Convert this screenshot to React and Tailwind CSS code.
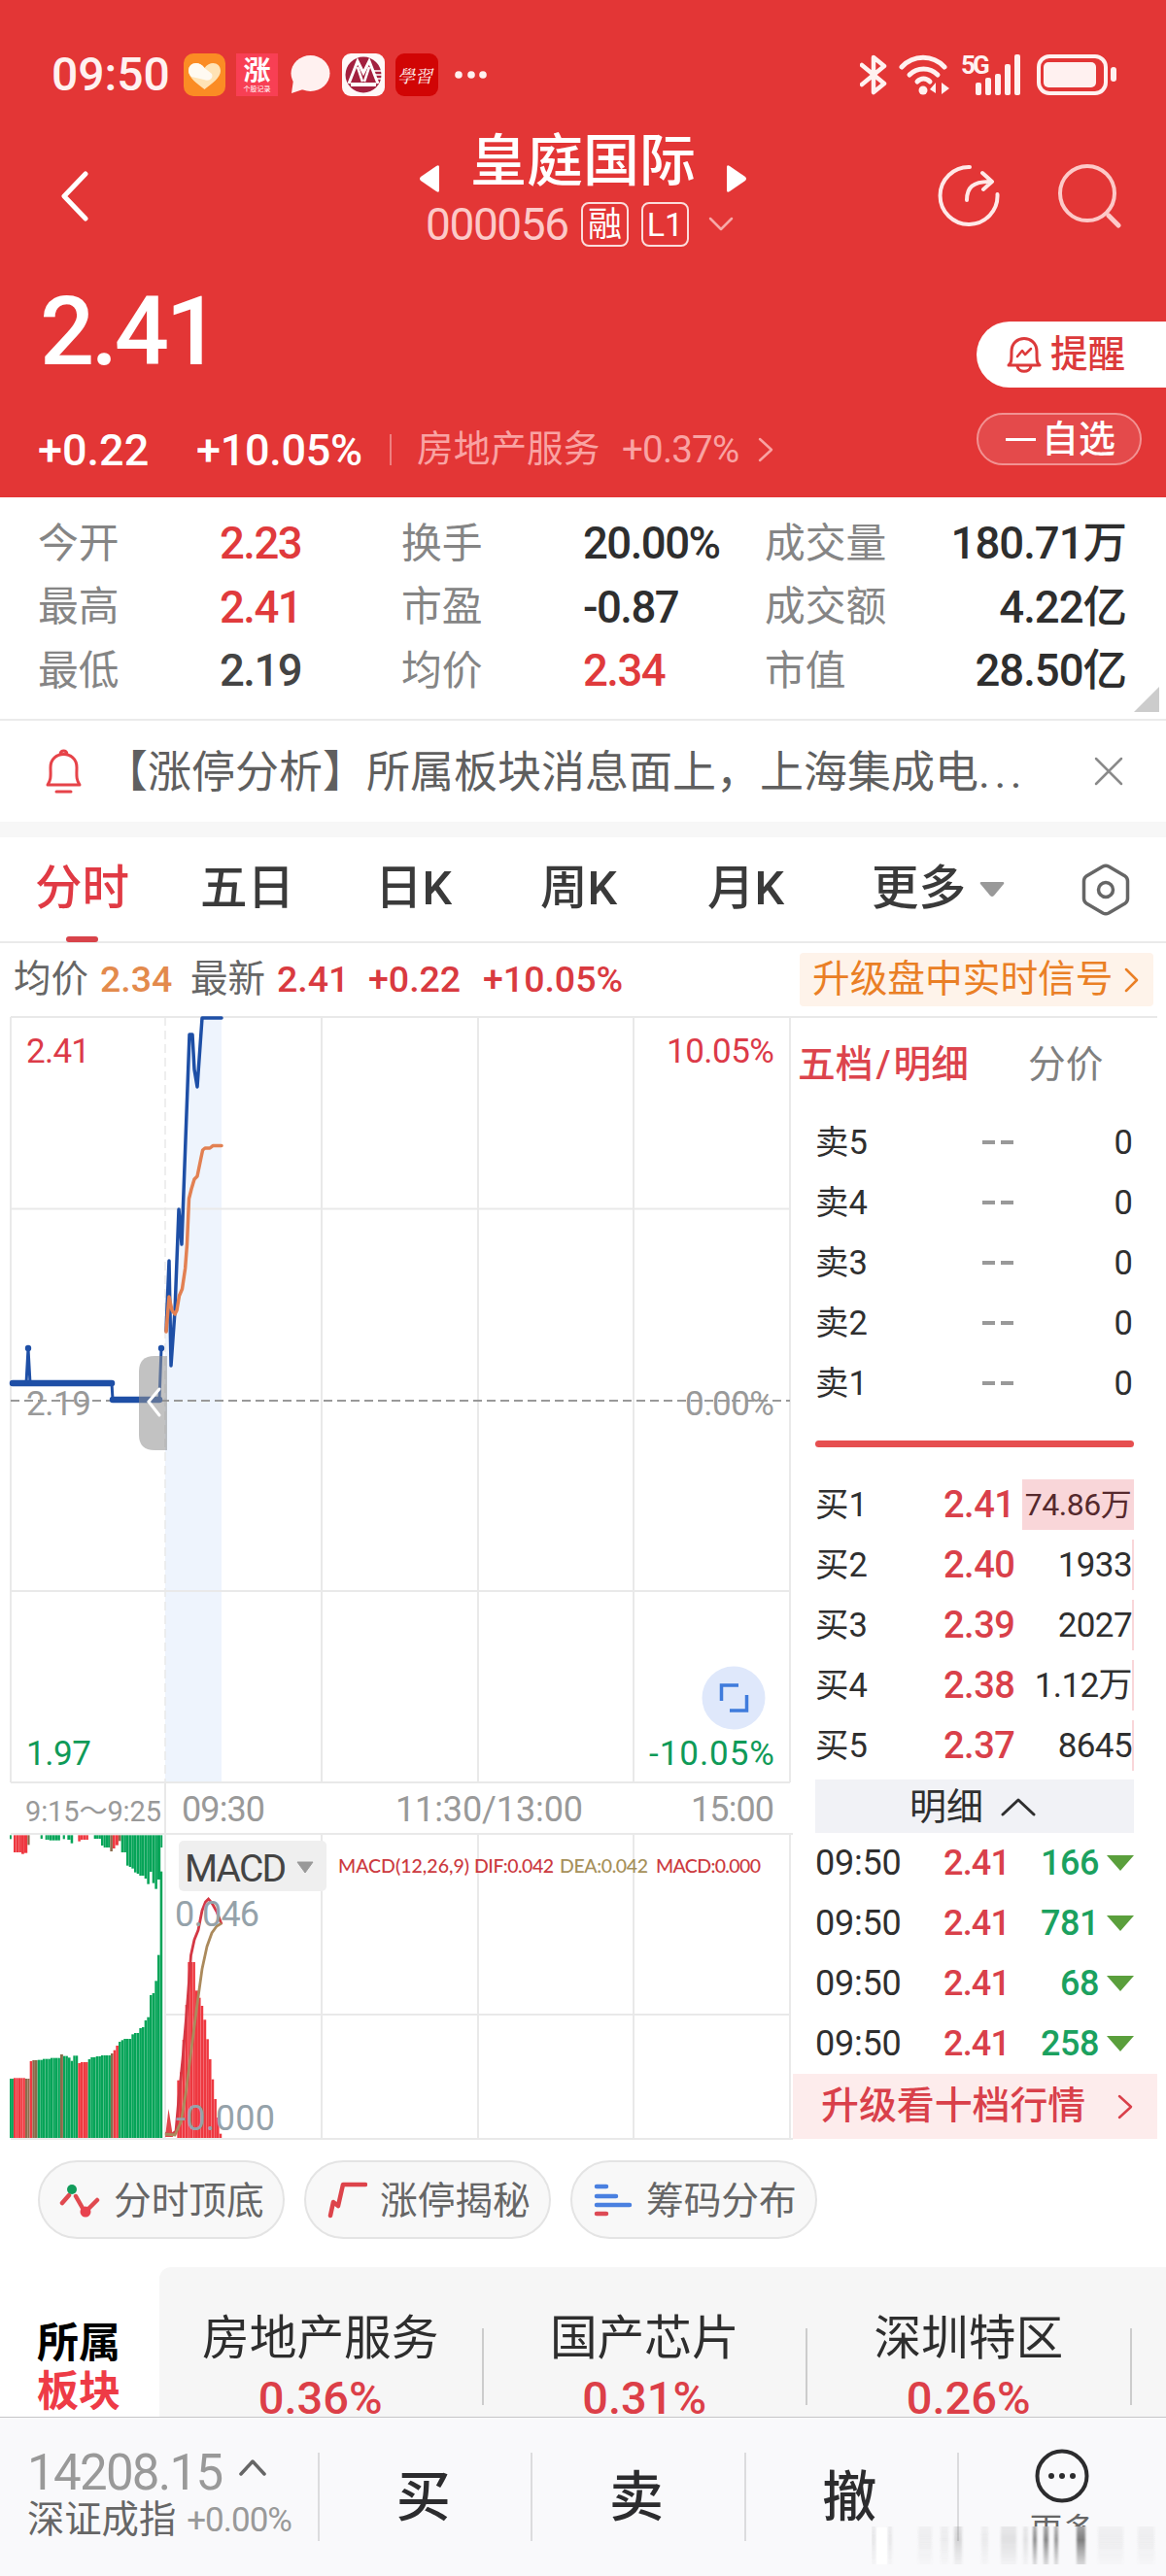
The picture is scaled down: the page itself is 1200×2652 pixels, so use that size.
import React from 'react';

const stats = [
    [['今开', '2.23', 'text-[#e03a3c]'], ['换手', '20.00%', 'text-[#2e2e2e]'], ['成交量', '180.71万']],
    [['最高', '2.41', 'text-[#e03a3c]'], ['市盈', '-0.87', 'text-[#2e2e2e]'], ['成交额', '4.22亿']],
    [['最低', '2.19', 'text-[#444]'], ['均价', '2.34', 'text-[#e03a3c]'], ['市值', '28.50亿']],
];

const bids = [
    ['买1', '2.41', '74.86万'],
    ['买2', '2.40', '1933'],
    ['买3', '2.39', '2027'],
    ['买4', '2.38', '1.12万'],
    ['买5', '2.37', '8645'],
];

const boards = [
    ['房地产服务', '0.36%'],
    ['国产芯片', '0.31%'],
    ['深圳特区', '0.26%'],
];

// [x, width, top, colour], the scale is three units to a pixel
const G = '#06a458';
const R = '#ee3840';
const B = '#8b6b4b';
const auctionBars = [
    [30, 12, 1020, G], [42, 36, 1018, R], [78, 14, 1020, B], [92, 8, 966, R], [100, 16, 963, B],
    [116, 16, 962, G], [132, 24, 959, G], [156, 30, 956, G], [186, 9, 945, B], [195, 15, 950, G],
    [210, 8, 955, G], [218, 8, 965, G], [226, 15, 949, G], [241, 8, 972, R], [249, 23, 969, R],
    [272, 8, 960, G], [280, 16, 954, G], [296, 16, 951, G], [312, 30, 948, G], [342, 8, 942, B],
    [350, 8, 932, R], [358, 8, 918, R], [366, 8, 906, G], [374, 8, 901, G], [382, 24, 897, G],
    [406, 8, 883, G], [414, 16, 879, G], [430, 8, 864, G], [438, 8, 861, G], [446, 8, 840, G],
    [454, 8, 830, G], [462, 8, 762, G], [470, 8, 756, G], [478, 8, 718, G], [486, 8, 638, G],
    [494, 8, 380, G],
];
const unmatchedBars = [
    [30, 6, 280, G], [42, 8, 321, R], [50, 16, 321, R], [66, 9, 326, R], [75, 10, 323, R], [85, 7, 298, B],
    [125, 7, 279, G], [140, 12, 282, G], [152, 34, 284, G], [194, 7, 280, G], [208, 10, 282, G], [218, 8, 293, G],
    [241, 8, 287, R], [249, 24, 282, R], [290, 22, 279, G], [312, 8, 300, G], [320, 20, 306, G], [340, 8, 318, B],
    [348, 8, 309, R], [356, 10, 299, R], [366, 8, 286, B], [374, 16, 321, G], [390, 8, 362, G], [398, 8, 366, G],
    [406, 8, 371, G], [414, 8, 383, G], [422, 8, 387, G], [430, 16, 393, G], [446, 8, 402, G], [454, 8, 419, G],
    [462, 8, 381, G], [470, 8, 416, G], [478, 8, 434, G], [486, 10, 405, G], [496, 6, 306, G],
];
const macdBars = [
    [547, 8, 1025], [555, 8, 1000], [563, 9, 900], [572, 8, 792], [580, 23, 660], [603, 9, 748],
    [612, 8, 770], [620, 8, 795], [628, 9, 838], [637, 8, 898], [645, 8, 960], [653, 8, 1022],
    [661, 8, 1083], [669, 8, 1140], [677, 8, 1190],
];

const Chevron = ({ points, className, w, h, width = 3 }) => (
    <svg className={className} width={w} height={h} viewBox={`0 0 ${w} ${h}`} fill="none" stroke="currentColor"
        strokeWidth={width} strokeLinecap="round" strokeLinejoin="round">
        <polyline points={points} />
    </svg>
);

const StatusBar = () => (
    <div className="flex h-[134px] items-center pt-5 pl-[53px] text-[#fff1f0]">
        <span className="w-[136px] shrink-0 text-[48px] font-medium leading-none">09:50</span>
        <svg width="43" height="44" viewBox="0 0 43 44" className="mr-[11px]">
            <rect width="43" height="44" rx="10" fill="#fb8c24" />
            <path d="M21.5 37 C14 31 5 25 5 18 C5 9 16 7 21.5 15 C27 7 38 9 38 18 C38 25 29 31 21.5 37Z" fill="#ffe3b5" />
            <path d="M5 18C5 9 16 7 21.5 15L29 21C31 26 26 29 21 27L8 24C6 22 5 20 5 18Z" fill="#fffaf2" />
        </svg>
        <div className="mr-[13px] flex h-[44px] w-[43px] flex-col items-center bg-[#f83f54] pt-[5px] leading-none text-white">
            <span className="text-[28px] font-bold leading-[28px]">涨</span>
            <span className="text-[7px] leading-[8px]">个股记录</span>
        </div>
        <svg width="41" height="40" viewBox="0 0 41 40" className="mr-[12px]" fill="#fff1f0">
            <ellipse cx="20.500" cy="18.500" rx="20" ry="18.500" />
            <path d="M3 25 L1 39 L16 34Z" />
        </svg>
        <svg width="44" height="44" viewBox="0 0 44 44" className="mr-[11px]">
            <rect width="44" height="44" rx="9" fill="#fff8f8" />
            <circle cx="22" cy="22" r="18.500" fill="#a3203f" />
            <path d="M7 31 L16 8 L22 20 L28 8 L37 31" fill="none" stroke="#fff" strokeWidth="3" />
            <path d="M9 32H35" stroke="#fff" strokeWidth="4" />
            <path d="M16 14 L21 29M28 14 L23 29" stroke="#fff" strokeWidth="2.500" />
            <path d="M32 18h10M34 22h8M36 26h6" stroke="#fff" strokeWidth="1.500" />
        </svg>
        <div className="mr-[17px] flex h-[44px] w-[44px] items-center justify-center rounded-[9px] bg-[#d10505]">
            <span className="-skew-x-12 font-['Noto_Serif_CJK_SC','Noto_Sans_CJK_TC',serif] text-[18px] leading-none">學習</span>
        </div>
        <svg width="34" height="8" viewBox="0 0 34 8" fill="#fff1f0">
            <circle cx="4" cy="4" r="3.800" /><circle cx="17" cy="4" r="3.800" /><circle cx="29" cy="4" r="3.800" />
        </svg>

        <svg width="28" height="42" viewBox="0 0 28 42" className="ml-[383px]" fill="none" stroke="#fff1f0" strokeWidth="4.500" strokeLinejoin="round" strokeLinecap="round">
            <path d="M2 11 L25 30 L14 39 V3 L25 12 L2 31" />
        </svg>
        <svg width="53" height="42" viewBox="0 0 53 42" className="ml-[12px]" fill="none" stroke="#fff1f0" strokeWidth="5" strokeLinecap="round">
            <path d="M3 13 C15 0 35 0 47 13" />
            <path d="M11 21 C19 13 32 13 40 21" />
            <path d="M19 28 C23 24 28 24 32 28" />
            <circle cx="25" cy="37" r="4.500" fill="#fff1f0" stroke="none" />
            <path d="M38 29 V40 L32 36Z M44 41 V29 L52 35Z" fill="#fff1f0" stroke="none" />
        </svg>
        <div className="relative ml-[11px]">
            <svg width="62" height="42" viewBox="0 0 62 42" fill="#fff1f0">
                <rect x="15" y="29" width="6" height="13" rx="2" />
                <rect x="25" y="24" width="6" height="18" rx="2" />
                <rect x="35" y="20" width="6" height="22" rx="2" />
                <rect x="45" y="10" width="6" height="32" rx="2" />
                <rect x="55" y="0" width="6" height="42" rx="2" />
            </svg>
            <span className="absolute left-0 top-0 text-[26px] font-bold leading-[23px] tracking-[-3px]">5G</span>
        </div>
        <svg width="84" height="42" viewBox="0 0 84 42" className="ml-[16px]">
            <rect x="2" y="2" width="69" height="38" rx="11" fill="none" stroke="#fff1f0" strokeWidth="4" />
            <rect x="7" y="8" width="54" height="26" rx="5" fill="#fff1f0" />
            <rect x="76" y="13" width="6" height="15" rx="3" fill="#fff1f0" />
        </svg>
    </div>
);

const TitleBar = () => (
    <div className="flex h-[132px] items-center text-white">
        <Chevron points="26,3 4,26 26,49" w={30} h={52} width={5} className="ml-[62px] mr-[340px] mt-1 shrink-0" />
        <div className="w-[336px] shrink-0 self-start">
            <div className="flex h-[64px] items-center justify-between">
                <svg width="20" height="28" viewBox="0 0 20 28" className="mt-[36px]"><path d="M20 2v24q0 3-3 1L1 16q-2-2 0-4L17 1q3-2 3 1Z" fill="#fff" /></svg>
                <h1 className="text-[58px] font-medium leading-none">皇庭国际</h1>
                <svg width="20" height="28" viewBox="0 0 20 28" className="mt-[36px]"><path d="M0 2v24q0 3 3 1L19 16q2-2 0-4L3 1q-3-2-3 1Z" fill="#fff" /></svg>
            </div>
            <div className="flex h-[66px] items-center pl-[6px]">
                <span className="w-[160px] text-[46px] leading-none tracking-[-1.400px] text-[#fcc9c8]">000056</span>
                <span className="flex h-[46px] w-[49px] items-center justify-center rounded-lg border-2 border-[#fbdcdb] text-[35px] leading-none">融</span>
                <span className="ml-[13px] flex h-[46px] w-[49px] items-center justify-center rounded-lg border-2 border-[#fbdcdb] text-[34px] leading-none">L1</span>
                <Chevron points="2,2 13,13 24,2" w={26} h={16} width={2.5} className="ml-5 text-[#f7a9a8]" />
            </div>
        </div>
        <svg width="65" height="65" viewBox="0 0 65 65" className="ml-[197px] mt-[3px] shrink-0" fill="none" stroke="#ffe9e8" strokeWidth="4" strokeLinecap="round" strokeLinejoin="round">
            <path d="M33 3 A29.500 29.500 0 1 0 61.500 31" />
            <path d="M30 37 C30 24 36 18 54 18 M46 9 L56 18 L47 26" />
        </svg>
        <svg width="66" height="66" viewBox="0 0 66 66" className="ml-[58px] mt-[3px] shrink-0" fill="none" stroke="#fdc9c8" strokeWidth="4" strokeLinecap="round">
            <circle cx="31" cy="30" r="28" />
            <path d="M53 53 L63 63" strokeWidth="5" />
        </svg>
    </div>
);

const PriceBlock = () => (
    <div className="flex h-[246px] justify-between text-white">
        <div className="pl-[39px]">
            <div className="flex h-[150px] items-center pl-[2px] text-[99px] font-medium leading-none tracking-[-3.500px]">2.41</div>
            <div className="flex h-[94px] items-center whitespace-nowrap leading-none">
                <span className="w-[163px] shrink-0 text-[45px] font-medium">+0.22</span>
                <span className="w-[199px] shrink-0 text-[45px] font-medium tracking-[-0.300px]">+10.05%</span>
                <span className="h-8 w-[2px] shrink-0 bg-[#ef7f7f]" />
                <span className="w-[237px] shrink-0 pl-[26px] text-[37.700px] text-[#f9a3a3]">房地产服务</span>
                <span className="w-[140px] shrink-0 text-[38.500px] tracking-[-0.800px] text-[#f9a3a3]">+0.37%</span>
                <Chevron points="2,2 14,13 2,24" w={16} h={26} width={2.5} className="shrink-0 text-[#f9a3a3]" />
            </div>
        </div>
        <div className="flex w-[195px] shrink-0 flex-col pt-[65px]">
            <div className="flex h-[68px] items-center rounded-l-full bg-white pl-[31px] text-[#dc3a3b]">
                <svg width="36" height="38" viewBox="0 0 36 38" fill="none" stroke="currentColor" strokeWidth="3" strokeLinecap="round" strokeLinejoin="round">
                    <path d="M2 30 C5 28 5 25 5 16 C5 -2 31 -2 31 16 C31 25 31 28 34 30Z M11 31 C12 38 24 38 25 31" />
                    <path d="M11 21 L16 15 L19 19 L25 13" strokeWidth="2.500" />
                </svg>
                <span className="ml-[9px] text-[38.500px] font-medium leading-none">提醒</span>
            </div>
            <div className="mt-[26px] flex h-[54px] w-[170px] items-center rounded-full border-2 border-[#f29292] bg-[#e44a4b] pl-[28px]">
                <span className="h-[3px] w-[31px] bg-white" />
                <span className="ml-[6px] text-[38px] font-medium leading-none">自选</span>
            </div>
        </div>
    </div>
);

const Stats = () => (
    <section className="relative h-[228px] pt-[15px]">
        {stats.map(([a, b, c]) => (
            <div key={a[0]} className="flex h-[65.500px] items-center whitespace-nowrap pl-[39px] pr-[41px] text-[45.500px] leading-none tracking-[-1.500px]">
                <span className="w-[187px] text-[41.800px] tracking-normal text-[#858585]">{a[0]}</span>
                <span className={`w-[187px] font-medium ${a[2]}`}>{a[1]}</span>
                <span className="w-[187px] text-[41.800px] tracking-normal text-[#858585]">{b[0]}</span>
                <span className={`w-[187px] font-medium ${b[2]}`}>{b[1]}</span>
                <span className="text-[41.800px] tracking-normal text-[#858585]">{c[0]}</span>
                <span className="ml-auto font-medium tracking-[-1px] text-[#2e2e2e]">{c[1]}</span>
            </div>
        ))}
        <svg width="26" height="26" viewBox="0 0 26 26" className="absolute bottom-[7px] right-[7px]"><path d="M26 0v26H0Z" fill="#ccc" /></svg>
    </section>
);

const News = () => (
    <section className="flex h-[106px] items-center border-t-2 border-[#ebebeb]">
        <svg width="37" height="46" viewBox="0 0 37 46" className="ml-[47px] shrink-0" fill="none" stroke="#e64349" strokeWidth="3" strokeLinecap="round" strokeLinejoin="round">
            <path d="M2 37 C6 31 5 27 5 19 C5 1 32 1 32 19 C32 27 31 31 35 37Z M15 5 C16 1 21 1 22 5 M11 44 H26" />
        </svg>
        <span className="ml-[23px] mt-[2px] whitespace-nowrap text-[45px] leading-none text-[#5f5f5f]">【涨停分析】所属板块消息面上，上海集成电<span className="tracking-[4.500px]">...</span></span>
        <svg width="30" height="30" viewBox="0 0 30 30" className="ml-auto mr-[44px]" stroke="#8a8a8a" strokeWidth="2.500" strokeLinecap="round"><path d="M2 2 L28 28 M28 2 L2 28" /></svg>
    </section>
);

const Tabs = () => (
    <nav className="relative flex h-[109px] items-center whitespace-nowrap border-b-2 border-[#eaeaea] pl-[36px] text-[48.500px] font-medium leading-none text-[#3a3a3a]">
        <span className="w-[170px] text-[#e03a44]">分时</span>
        <span className="w-[180px]">五日</span>
        <span className="w-[170px]">日K</span>
        <span className="w-[172px]">周K</span>
        <span className="w-[169px]">月K</span>
        <span className="w-[111px]">更多</span>
        <svg width="26" height="15" viewBox="0 0 26 15"><path d="M2 0h22q2 0 1 2L15 14q-2 2-4 0L1 2q-1-2 1-2Z" fill="#999" /></svg>
        <svg width="50" height="54" viewBox="0 0 50 54" className="ml-[79px]" fill="none" stroke="#666" strokeWidth="3.500" strokeLinejoin="round">
            <path d="M22 3 Q25 1.500 28 3 L45 13 Q47.500 15 47.500 18 V36 Q47.500 39 45 41 L28 51 Q25 52.500 22 51 L5 41 Q2.500 39 2.500 36 V18 Q2.500 15 5 13Z" />
            <circle cx="25" cy="27" r="7.500" />
        </svg>
        <span className="absolute bottom-[-1px] left-[68px] h-[6px] w-[33px] rounded-full bg-[#d8434a]" />
    </nav>
);

const InfoRow = () => (
    <div className="flex h-[75px] items-center whitespace-nowrap pl-[14px] text-[37.500px] leading-none text-[#d93a40]">
        <span className="w-[89px] text-[38.500px] text-[#666]">均价</span>
        <span className="w-[93px] font-medium text-[#e38a4c]">2.34</span>
        <span className="w-[89px] text-[38.500px] text-[#666]">最新</span>
        <span className="w-[94px] font-medium">2.41</span>
        <span className="w-[118px] font-medium">+0.22</span>
        <span className="font-medium">+10.05%</span>
        <span className="ml-auto mr-[13px] flex h-[55px] w-[364px] items-center rounded bg-[#fef3ea] pl-[13px] text-[38.700px] text-[#ea7f25]">
            升级盘中实时信号
            <Chevron points="2,2 13,13 2,24" w={16} h={26} width={2.5} className="ml-[11px]" />
        </span>
    </div>
);

const bar = ([x, w, top, fill], i, base) => {
    const n = Math.max(1, Math.round(w / 8));
    return Array.from({ length: n }, (_, k) => (
        <rect key={`${i}-${k}`} x={x / 3 + (k * w) / n / 3} y={Math.min(top, base) / 3} width={w / n / 3 - 0.12} height={Math.abs(base - top) / 3} fill={fill} />
    ));
};

const Charts = () => (
    <svg width="816" height="1160" viewBox="0 1046 816 1160" className="block shrink-0" fontFamily="Roboto, 'Noto Sans CJK SC', sans-serif">
        {/* price chart */}
        <path d="M208 1048H228V1835H170V1371L174 1335L180 1350L184 1245L187 1281L195 1065L198 1065L203 1119Z" fill="#eef4fd" />
        <g stroke="#e9e9e9" strokeWidth="2" fill="none">
            <path d="M11 1047V1835M331 1047V1835M492 1047V1835M652 1047V1835M813 1047V1835" />
            <path d="M11 1047H816M11 1244.500H813M11 1638H813M11 1835H813" />
            <path d="M170 1047V1835" strokeDasharray="9 5" strokeWidth="1.500" />
            <path d="M170 1835V2202M331 1888V2202M492 1888V2202M652 1888V2202M813 1888V2202" />
            <path d="M11 1888H816M171 2074H813M11 2202H816" />
        </g>
        <path d="M11 1442H813" stroke="#999" strokeWidth="2" strokeDasharray="9 5" />
        <g fontSize="35">
            <text x="27" y="1094" fill="#dc3a48" textLength="66">2.41</text>
            <text x="797" y="1094" fill="#dc3a48" textAnchor="end" textLength="111">10.05%</text>
            <text x="27" y="1457" fill="#999" textLength="67">2.19</text>
            <text x="797" y="1457" fill="#999" textAnchor="end" textLength="92">0.00%</text>
            <text x="27" y="1817" fill="#0f9a58" textLength="67">1.97</text>
            <text x="797" y="1817" fill="#0f9a58" textAnchor="end" textLength="129">-10.05%</text>
        </g>
        <g fill="none" strokeLinejoin="round" strokeLinecap="round">
            <path d="M13 1424H115M116 1441H164" stroke="#1e4fa6" strokeWidth="6.500" />
            <path d="M27 1424L29 1388L31 1424M115 1424L116 1441M164 1441L166 1388" stroke="#1e4fa6" strokeWidth="3" />
            <path d="M171 1370L174 1298L176 1406L180 1350L184 1245L187 1281L195 1065H198L200 1101L203 1119L208 1048H228" stroke="#1e4fa6" strokeWidth="3.500" />
            <path d="M171 1371L174 1335L177 1349L180 1353L182 1349L184.500 1334L187.500 1327L190.600 1306L192.500 1281L194.500 1234L197 1224L200 1214L203 1211L206.700 1193L208.600 1184L211 1182H216L219 1179.600H228" stroke="#e28052" strokeWidth="3.500" />
        </g>
        <circle cx="29" cy="1388" r="3.200" fill="#1e4fa6" />
        <circle cx="166" cy="1388" r="3.200" fill="#1e4fa6" />
        <path d="M172 1396V1493H159Q143 1493 143 1477V1412Q143 1396 159 1396Z" fill="#8f8f8f" fillOpacity="0.550" />
        <polyline points="164,1430 153,1443 164,1457" fill="none" stroke="#fff" strokeWidth="3" strokeLinecap="round" />
        <circle cx="755" cy="1748" r="32.500" fill="#dfe8fb" />
        <path d="M742.500 1751V1735H760M751 1761H768.500V1745" fill="none" stroke="#3f7bdc" strokeWidth="3.500" />

        {/* time axis */}
        <g fill="#999" fontSize="36">
            <text x="26" y="1875" fontSize="29" textLength="140">9:15～9:25</text>
            <text x="187" y="1875" textLength="86">09:30</text>
            <text x="407" y="1875" textLength="193">11:30/13:00</text>
            <text x="711" y="1875" textLength="86">15:00</text>
        </g>

        {/* call auction volume */}
        <g transform="translate(0 1800)">
            {auctionBars.map((b, i) => bar(b, i, 1203))}
            {unmatchedBars.map((b, i) => bar(b, i, 268))}
            {macdBars.map((b, i) => bar([...b, R], i, 1203))}
        </g>
        <path d="M170 2200L173.500 2171L178 2200Z" fill="#e0474b" />
        <path d="M170 2196L176 2198L181 2194L184 2160L188 2120L192.500 2067L196.500 2013L200 1997L204 1987L208 1967L211.500 1958L214.500 1955L218 1959L223 1968L228 1981" fill="none" stroke="#d43844" strokeWidth="2.800" />
        <path d="M170 2197L180 2198L186.500 2184L191.500 2153L196.500 2113L203 2063L208 2027L213 2004L218 1990L223 1983L228 1980" fill="none" stroke="#ab8a5c" strokeWidth="2.800" />

        <rect x="184" y="1895" width="152" height="52" rx="5" fill="#efefef" />
        <text x="190" y="1937" fontSize="39" fill="#444" textLength="105">MACD</text>
        <path d="M306 1917H322L314 1928Z" fill="#999" stroke="#999" />
        <g fontSize="19.500" fontFamily="Lato, sans-serif" fontWeight="500" fill="#cc3a40">
            <text x="348" y="1928" textLength="135">MACD(12,26,9)</text>
            <text x="488" y="1928" textLength="82">DIF:0.042</text>
            <text x="576" y="1928" textLength="91" fill="#a6905a">DEA:0.042</text>
            <text x="675" y="1928" textLength="108">MACD:0.000</text>
        </g>
        <g fontSize="36" fill="#95a2aa">
            <text x="180" y="1983" textLength="87">0.046</text>
            <text x="181" y="2193" textLength="102">-0.000</text>
        </g>
    </svg>
);

const OrderBook = () => (
    <div className="w-[375px] border-t-2 border-[#e9e9e9]">
        <div className="flex h-[97px] items-center pl-[5px] text-[38.700px] leading-none">
            <span className="w-[237px] font-medium text-[#dc444d]">五档<span className="px-[3px]">/</span>明细</span>
            <span className="text-[#808080]">分价</span>
        </div>
        <div className="pl-[23px] pr-6">
            {['卖5', '卖4', '卖3', '卖2', '卖1'].map((name) => (
                <div key={name} className="flex h-[62px] items-center text-[34.500px] leading-none text-[#2f2f2f]">
                    <span className="w-[172px]">{name}</span>
                    <span className="flex gap-[6px]">
                        <i className="h-1 w-[13px] bg-[#999]" />
                        <i className="h-1 w-[13px] bg-[#999]" />
                    </span>
                    <span className="ml-auto pr-px">0</span>
                </div>
            ))}
            <div className="mt-[28px] mb-[28px] h-[7px] rounded-full bg-[#e64f50]" />
            {bids.map(([name, price, volume], i) => (
                <div key={name} className="flex h-[62px] items-center whitespace-nowrap text-[34.500px] leading-none text-[#2f2f2f]">
                    <span className="w-[132px]">{name}</span>
                    <span className="w-[81px] text-[38px] font-medium tracking-[-0.500px] text-[#d9404a]">{price}</span>
                    {i === 0
                        ? <span className="flex h-[52px] w-[115px] items-center justify-center bg-[#f9d6d9] text-[32px] tracking-[-0.500px] text-[#55292d]">{volume}</span>
                        : <span className="ml-auto flex h-[52px] items-center border-r-2 border-[#f9d6d9] text-[35px] tracking-[-0.600px]">{volume}</span>}
                </div>
            ))}
            <div className="mt-[4px] flex h-[55px] items-center justify-center gap-[18px] bg-[#f1f2f6] pr-1 text-[38px] leading-none text-[#2f2f2f]">
                明细
                <Chevron points="2,18 18,3 34,18" w={36} h={20} />
            </div>
            {['166', '781', '68', '258'].map((volume) => (
                <div key={volume} className="flex h-[62px] items-center text-[36px] leading-none text-[#2f2f2f]">
                    <span className="w-[132px] tracking-[-0.200px]">09:50</span>
                    <span className="w-[81px] font-medium tracking-[-0.800px] text-[#d9404a]">2.41</span>
                    <span className="ml-auto font-medium tracking-[-0.500px] text-[#1ba15f]">{volume}</span>
                    <svg width="28" height="16" viewBox="0 0 28 16" className="ml-[8px]"><path d="M0 0H28L14 16Z" fill="#5a9f3c" /></svg>
                </div>
            ))}
        </div>
        <div className="flex h-[67px] items-center bg-[#fdecec] pl-[29px] text-[38.900px] font-medium leading-none text-[#d9404a]">
            升级看十档行情
            <Chevron points="2,2 14,13 2,24" w={16} h={26} width={2.5} className="ml-[33px]" />
        </div>
    </div>
);

const Chips = () => (
    <div className="mt-[18px] flex gap-5 pl-[39px] text-[38.700px] leading-none text-[#666]">
        <span className="flex h-[81px] w-[254px] items-center rounded-full border-2 border-[#e4e4e4] bg-[#f8f8f8] pl-[20px]">
            <svg width="42" height="36" viewBox="0 0 42 36" fill="none" stroke="#e04a50" strokeWidth="4.500" strokeLinecap="round">
                <path d="M3 21 L10 13 M17 14 L25 28 M30 27 L39 18" />
                <circle cx="13" cy="7" r="5" fill="#129c5b" stroke="none" /><circle cx="27" cy="30" r="5.500" fill="#e8434f" stroke="none" />
            </svg>
            <span className="ml-[14px] mt-[3px]">分时顶底</span>
        </span>
        <span className="flex h-[81px] w-[254px] items-center rounded-full border-2 border-[#e4e4e4] bg-[#f8f8f8] pl-[21px]">
            <svg width="42" height="38" viewBox="0 0 42 38" fill="none" stroke="#dd444b" strokeWidth="4.500" strokeLinecap="round" strokeLinejoin="round">
                <path d="M4 35 L7 21 L12 25 L17 3 H40" />
            </svg>
            <span className="ml-[13px] mt-[3px]">涨停揭秘</span>
        </span>
        <span className="flex h-[81px] w-[254px] items-center rounded-full border-2 border-[#e4e4e4] bg-[#f8f8f8] pl-[22px]">
            <svg width="40" height="34" viewBox="0 0 40 34" fill="none" stroke="#4a80e0" strokeWidth="4.500" strokeLinecap="round">
                <path d="M3 3H13M3 13H23M3 22H37" /><path d="M3 31H13" stroke="#dd4a55" />
            </svg>
            <span className="ml-[14px] mt-[3px]">筹码分布</span>
        </span>
    </div>
);

const Boards = () => (
    <section className="mt-[29px] flex h-[154px]">
        <div className="flex w-[164px] flex-col pt-[53px] pl-[38px] text-[43px] font-bold leading-[50px]">
            <span className="text-black">所属</span>
            <span className="text-[#ee3b46]">板块</span>
        </div>
        <div className="flex flex-1 rounded-tl-xl bg-[#f6f6f6]">
            {boards.map(([name, change]) => (
                <div key={name} className="flex w-[333.500px] shrink-0 items-start">
                    <div className="flex flex-1 flex-col items-center pt-[42px]">
                        <span className="h-[64px] text-[48.700px] leading-[63px] text-[#2e2e2e]">{name}</span>
                        <span className="text-[47px] font-medium leading-[58px] text-[#dc3f48]">{change}</span>
                    </div>
                    <span className="mt-[63px] h-[79px] w-[2px] bg-[#ccc]" />
                </div>
            ))}
        </div>
    </section>
);

// [x, width, opacity] of the vertical smear under the last button
const streaks = [
    [0, 4, 0.12], [17, 4, 0.12], [48, 14, 0.07], [71, 8, 0.08], [85, 8, 0.22], [113, 7, 0.09], [133, 16, 0.15],
    [156, 5, 0.14], [166, 4, 0.65], [177, 5, 0.7], [188, 4, 0.6], [211, 9, 0.75], [233, 26, 0.07], [274, 17, 0.07],
];

const Streaks = () => (
    <svg width="300" height="40" viewBox="0 0 300 40" className="absolute left-[-90px] top-[76px]">
        <defs>
            <linearGradient id="smear" x1="0" y1="0" x2="0" y2="1">
                <stop offset="0" stopColor="#555" stopOpacity="0.700" />
                <stop offset="0.350" stopColor="#555" />
                <stop offset="1" stopColor="#777" stopOpacity="0.350" />
            </linearGradient>
            <filter id="soft" x="-20%" width="140%"><feGaussianBlur stdDeviation="1.300 0.300" /></filter>
        </defs>
        <rect x="5" y="1" width="11" height="38" fill="#fff" />
        <g filter="url(#soft)">
            {streaks.map(([x, w, o]) => <rect key={x} x={x} y="0" width={w} height="39" fill="url(#smear)" opacity={o} />)}
        </g>
    </svg>
);

const BottomBar = () => (
    <footer className="relative flex h-[164px] border-t border-[#c6c6c8] bg-[#f9f9fb] text-[#2c2c2e]">
        <div className="w-[327px] whitespace-nowrap pl-[28px] leading-none">
            <div className="flex h-[82px] items-end text-[51px] tracking-[-1.700px] text-[#999]">
                <span>14208.15</span>
                <Chevron points="2,16 14,3 26,16" w={28} h={19} width={3.5} className="mb-[21px] ml-[17px] text-[#666]" />
            </div>
            <div className="flex h-[46px] items-center text-[38.300px] text-[#666]">
                深证成指
                <span className="ml-[11px] text-[35px] tracking-[-1px] text-[#999]">+0.00%</span>
            </div>
        </div>
        {['买', '卖', '撤'].map((action) => (
            <button key={action} className="mt-9 flex h-[91px] w-[219.300px] items-center justify-center border-l-2 border-[#dcdcde] pr-1 text-[56px] font-medium leading-none">
                {action}
            </button>
        ))}
        <div className="relative mt-9 flex h-[91px] flex-1 flex-col items-center border-l-2 border-[#dcdcde]">
            <svg width="58" height="58" viewBox="0 0 58 58" className="-mt-[5px]" fill="none" stroke="#2c2c2e" strokeWidth="4">
                <ellipse cx="29" cy="29" rx="25.500" ry="25.500" />
                <g fill="#2c2c2e" stroke="none"><circle cx="18" cy="29" r="3" /><circle cx="29" cy="29" r="3" /><circle cx="40" cy="29" r="3" /></g>
            </svg>
            <span className="mt-[8px] block h-[15px] overflow-hidden text-[34px] leading-[38px] text-[#666]">更多</span>
            <Streaks />
        </div>
    </footer>
);

export default function App() {
    return (
        <div className="h-[2652px] w-[1200px] overflow-hidden bg-white font-[Roboto,'Noto_Sans_CJK_SC',sans-serif]">
            <header className="h-[512px] bg-[#e33636]">
                <StatusBar />
                <TitleBar />
                <PriceBlock />
            </header>
            <Stats />
            <News />
            <div className="h-4 bg-[#f7f7f7]" />
            <Tabs />
            <InfoRow />
            <main className="flex h-[1160px]">
                <Charts />
                <OrderBook />
            </main>
            <Chips />
            <Boards />
            <BottomBar />
        </div>
    );
}
